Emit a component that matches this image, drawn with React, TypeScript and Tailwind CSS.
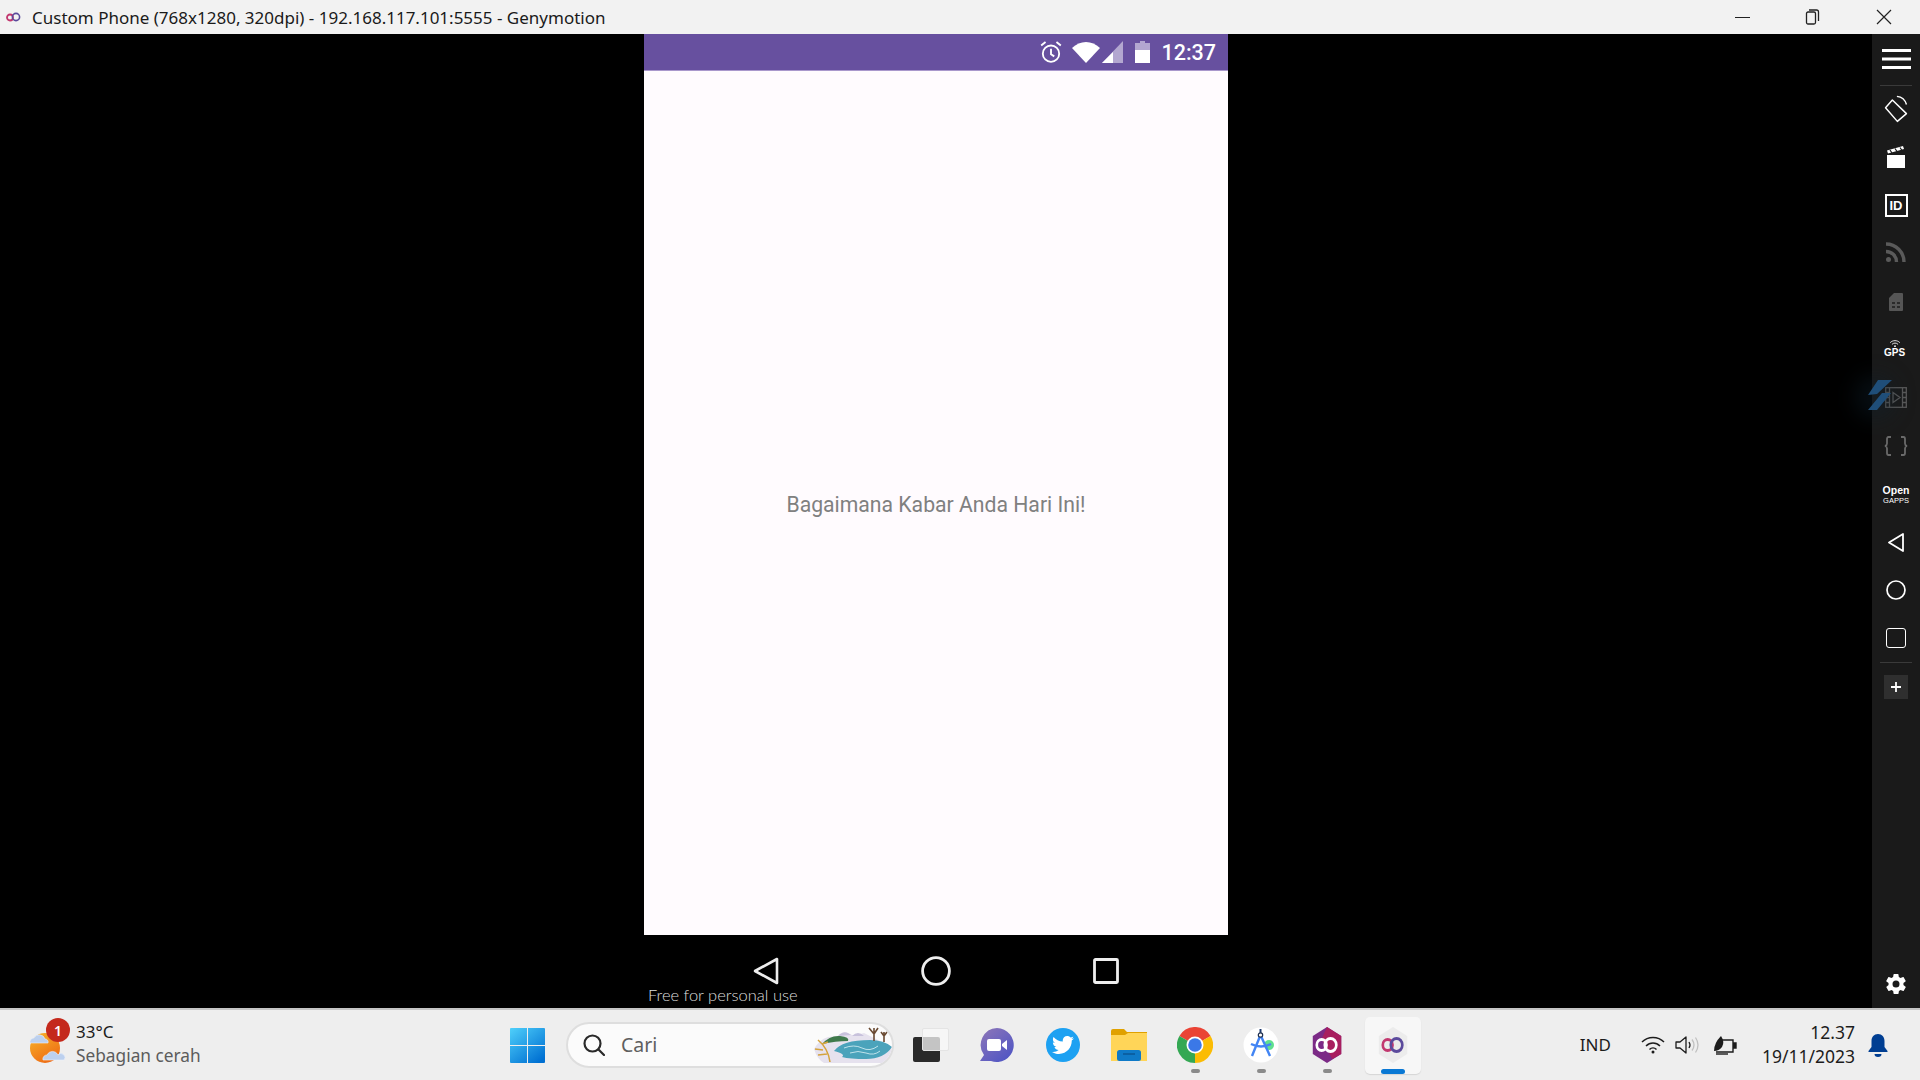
import { FaTwitter } from "react-icons/fa"

const uiFont = "font-['Noto_Sans',sans-serif]"

function GenyLoops({ a, b }: { a: string; b: string }) {
  return (
    <g fill="none" strokeWidth="3">
      <circle cx="12" cy="18" r="5.500" stroke={a} />
      <circle cx="22" cy="18" r="6.500" stroke={b} />
    </g>
  )
}

function TitleBar() {
  return (
    <div className="flex h-[34px] shrink-0 items-center bg-[#f2f2f2]">
      <svg viewBox="0 0 16 10" className="ml-[5px] h-[10px] w-[16px]">
        <circle cx="5" cy="5.5" r="3" fill="none" stroke="#c2386f" strokeWidth="1.8" />
        <circle cx="11" cy="5" r="3.6" fill="none" stroke="#5b4a9c" strokeWidth="1.6" />
      </svg>
      <span className="ml-[11px] whitespace-nowrap pt-[1px] text-[17px] text-[#1a1a1a] font-['Noto_Sans',sans-serif]">
        Custom Phone (768x1280, 320dpi) - 192.168.117.101:5555 - Genymotion
      </span>
      <div className="ml-auto flex items-center">
        <div className="h-px w-[15px] bg-[#222]" />
        <svg viewBox="0 0 15 16" className="ml-[55px] h-[16px] w-[15px]" fill="none" stroke="#222" strokeWidth="1.3">
          <rect x="1.5" y="3" width="9" height="12" rx="1.5" />
          <path d="M4 1h7.5a2 2 0 0 1 2 2v9" />
        </svg>
        <svg viewBox="0 0 16 16" className="ml-[56px] mr-[28px] h-[16px] w-[16px]" fill="none" stroke="#222" strokeWidth="1.2">
          <path d="M1 1l14 14M15 1L1 15" />
        </svg>
      </div>
    </div>
  )
}

function StatusBar() {
  return (
    <div className="flex h-[37px] shrink-0 items-center justify-end border-b border-[#a998cc] bg-[#67509f] pr-[12px]">
      <svg viewBox="0 0 22 22" className="mr-[1px] h-[24px] w-[24px]" fill="none" stroke="#fff" strokeWidth="1.7">
        <circle cx="11" cy="12.5" r="7.5" />
        <path d="M11 8v5l3 2M2 5l4-3.2M20 5l-4-3.2" />
      </svg>
      <svg viewBox="0 0 28 21" className="ml-[8px] h-[21px] w-[28px]" fill="#fff">
        <path d="M0 6C8-2 20-2 28 6L14 21z" />
      </svg>
      <svg viewBox="0 0 21 22" className="ml-[2px] h-[22px] w-[21px]">
        <path d="M21 0v22H0z" fill="#b3a7d0" />
        <path d="M11 11v11H0z" fill="#fff" />
      </svg>
      <svg viewBox="0 0 15 22" className="ml-[12px] h-[22px] w-[15px]">
        <path d="M5 0h5v2h5v20H0V2h5z" fill="#b3a7d0" />
        <path d="M0 9h15v13H0z" fill="#fff" />
      </svg>
      <span className="ml-[11px] pt-[2px] text-[21.500px] font-medium leading-none text-white font-['Roboto',sans-serif]">12:37</span>
    </div>
  )
}

function NavBar() {
  return (
    <div className="relative flex h-[73px] shrink-0 items-center justify-center gap-[142px] pb-[2px]">
      <svg viewBox="0 0 26 28" className="h-[28px] w-[26px]" fill="none" stroke="#eee" strokeWidth="2.6" strokeLinejoin="round">
        <path d="M24 2v24L2 14z" />
      </svg>
      <svg viewBox="0 0 30 30" className="h-[30px] w-[30px]" fill="none" stroke="#eee" strokeWidth="2.8">
        <circle cx="15" cy="15" r="13.4" />
      </svg>
      <svg viewBox="0 0 26 26" className="h-[26px] w-[26px]" fill="none" stroke="#eee" strokeWidth="2.8" strokeLinejoin="round">
        <rect x="1.5" y="1.5" width="23" height="23" rx="1" />
      </svg>
      <span className="absolute bottom-[5px] left-[4px] whitespace-nowrap text-[16.5px] font-light leading-none text-[#dddddd] font-['Lato',sans-serif]">
        Free for personal use
      </span>
    </div>
  )
}

function Toolbar() {
  return (
    <div className="flex w-[48px] shrink-0 flex-col items-center bg-[#1a1a1a]">
      <svg viewBox="0 0 29 20" className="mt-[15px] h-[20px] w-[29px]" fill="#fff">
        <path d="M0 0h29v3H0zM0 8.5h29v3H0zM0 17h29v3H0z" />
      </svg>
      <div className="mt-[16px] h-px w-[32px] bg-[#3a3a3a]" />
      <svg viewBox="0 0 26 33" className="mt-[9px] h-[30px] w-[26px]" fill="none" stroke="#fff" strokeWidth="1.6">
        <path d="M9 5.5L1.5 14l13 15 10-8.500z" strokeLinejoin="round" />
        <path d="M14 1.500c5 .5 9 3.500 10.500 9" />
      </svg>
      <svg viewBox="0 0 18 22" className="mt-[21px] h-[22px] w-[18px]" fill="#fff">
        <path d="M0 9h18v13H0z" />
        <path d="M0 4.500L16 0l1 3L1 7.500z" />
        <path d="M3 4l2 3M8 2.500l2 3M13 1.500l2 3" stroke="#1a1a1a" strokeWidth="1.200" />
      </svg>
      <div className="mt-[26px] flex h-[23px] w-[23px] items-center justify-center border-[2.500px] border-white text-[13px] font-bold leading-none text-white font-['Liberation_Sans',sans-serif]">
        ID
      </div>
      <svg viewBox="0 0 20 20" className="mt-[25px] h-[20px] w-[20px]" fill="none" stroke="#5a5a5a" strokeWidth="3.4">
        <path d="M0 2c10 0 18 8 18 18M0 9.500c6 0 10.500 4.500 10.500 10.500" />
        <circle cx="2.500" cy="17.500" r="2.500" fill="#5a5a5a" stroke="none" />
      </svg>
      <svg viewBox="0 0 14 18" className="mt-[31px] h-[18px] w-[14px]">
        <path d="M5 0h8a1 1 0 0 1 1 1v16a1 1 0 0 1-1 1H1a1 1 0 0 1-1-1V5z" fill="#555" />
        <path d="M3 9h3v2H3zM8 9h3v2H8zM3 13h3v2H3zM8 13h3v2H8z" fill="#2a2a2a" />
      </svg>
      <div className="mt-[29px] mr-[3px] flex h-[18px] flex-col items-center">
        <svg viewBox="0 0 12 8" className="h-[7px] w-[12px]" fill="none" stroke="#fff" strokeWidth="1">
          <path d="M.5 3c3-3 8-3 11 0M2.500 5c2-2 5-2 7 0" />
          <circle cx="6" cy="7" r="1" fill="#fff" stroke="none" />
        </svg>
        <span className="text-[10px] font-bold leading-[11px] text-white font-['Liberation_Sans',sans-serif]">GPS</span>
      </div>
      <div className="relative mt-[29px] h-[21px] w-[22px]">
        <svg viewBox="0 0 22 21" className="h-[21px] w-[22px]" fill="none" stroke="#5a5a5a" strokeWidth="1.3">
          <rect x=".7" y=".7" width="20.600" height="19.600" />
          <path d="M4.500 1v19M17.500 1v19M1 5.500h3.500M1 10.500h3.500M1 15.500h3.500M17.500 5.500H21M17.500 10.500H21M17.500 15.500H21M8 5.500v10l7-5z" />
        </svg>
        <div className="absolute left-[-30px] top-[-12px] h-[44px] w-[40px] rounded-full bg-[#10202e]/40 blur-[10px]" />
        <svg viewBox="0 0 24 30" className="absolute left-[-17px] top-[-7px] h-[30px] w-[24px]" fill="#1f4e79">
          <path d="M10 0h14L9 14 0 15zM14 13h9L9 30H0z" />
        </svg>
      </div>
      <svg viewBox="0 0 24 20" className="mt-[28px] h-[20px] w-[24px]" fill="none" stroke="#6a6a6a" strokeWidth="1.800">
        <path d="M7 1H4.500Q3 1 3 3v4.500Q3 9.500 1 10q2 .5 2 2.500V17q0 2 1.500 2H7M17 1h2.500Q21 1 21 3v4.500q0 2 2 2.500-2 .5-2 2.500V17q0 2-1.500 2H17" />
      </svg>
      <div className="mt-[29px] flex h-[20px] flex-col items-center text-white font-['Liberation_Sans',sans-serif]">
        <span className="text-[10.500px] font-bold leading-[11px]">Open</span>
        <span className="text-[7.500px] leading-[9px]">GAPPS</span>
      </div>
      <svg viewBox="0 0 16 19" className="mt-[28px] h-[19px] w-[16px]" fill="none" stroke="#fff" strokeWidth="1.8" strokeLinejoin="round">
        <path d="M15 1v17L1 9.500z" />
      </svg>
      <svg viewBox="0 0 20 20" className="mt-[28px] h-[20px] w-[20px]" fill="none" stroke="#fff" strokeWidth="1.7">
        <circle cx="10" cy="10" r="9" />
      </svg>
      <div className="mt-[28px] h-[20px] w-[20px] rounded-[3px] border-[1.7px] border-white" />
      <div className="mt-[14px] h-px w-[32px] bg-[#3a3a3a]" />
      <div className="mt-[12px] flex h-[24px] w-[24px] items-center justify-center bg-[#2f2f2f]">
        <svg viewBox="0 0 10 10" className="h-[10px] w-[10px]" stroke="#fff" strokeWidth="1.800">
          <path d="M5 0v10M0 5h10" />
        </svg>
      </div>
      <svg viewBox="0 0 24 24" className="mb-[12px] mt-auto h-[24px] w-[24px]" fill="#fff">
        <path
          fillRule="evenodd"
          d="M19.400 13c.04-.3.100-.7.100-1s-.03-.7-.1-1l2.100-1.600c.2-.15.25-.4.120-.65l-2-3.460c-.12-.22-.4-.3-.6-.22l-2.500 1c-.52-.4-1.080-.73-1.700-.98l-.37-2.650A.5.500 0 0 0 14 2h-4a.5.500 0 0 0-.5.420l-.37 2.650c-.62.25-1.180.58-1.700.98l-2.500-1c-.22-.08-.48 0-.6.22l-2 3.460c-.130.220-.070.500.120.650L4.600 11c-.06.300-.1.700-.1 1s.03.700.1 1l-2.100 1.650c-.2.150-.25.430-.12.650l2 3.460c.12.220.38.300.6.220l2.500-1c.52.400 1.080.730 1.700.980l.37 2.650c.04.240.25.420.5.420h4c.25 0 .46-.180.500-.420l.37-2.650c.62-.250 1.180-.580 1.700-.980l2.500 1c.220.080.480 0 .6-.220l2-3.460c.120-.220.070-.500-.120-.650zM12 15.500a3.500 3.500 0 1 1 0-7 3.500 3.500 0 0 1 0 7z"
        />
      </svg>
    </div>
  )
}

function Weather() {
  return (
    <div className="flex w-[494px] shrink-0 items-center pl-[28px]">
      <div className="relative h-[38px] w-[38px]">
        <svg viewBox="0 0 38 38" className="h-[38px] w-[38px]">
          <defs>
            <linearGradient id="sun" x1="0" y1="0" x2="0.600" y2="1">
              <stop offset="0" stopColor="#f8b62a" />
              <stop offset="1" stopColor="#ee6c14" />
            </linearGradient>
          </defs>
          <circle cx="17" cy="22" r="15" fill="url(#sun)" />
          <path d="M2 17a4 4 0 0 1 4-5 6 6 0 0 1 11 1 3 3 0 0 1 3 4z" fill="#bcd0ee" stroke="#e9f0fb" strokeWidth=".6" />
          <path d="M15 34a4 4 0 0 1 4-5 6 6 0 0 1 11 0 3.500 3.500 0 0 1 6 5z" fill="#bcd0ee" stroke="#e9f0fb" strokeWidth=".6" />
        </svg>
        <span className="absolute right-[-4px] top-[-8px] flex h-[24px] w-[24px] items-center justify-center rounded-full bg-[#c4291c] text-[14px] font-semibold text-white font-['Noto_Sans',sans-serif]">
          1
        </span>
      </div>
      <div className={`ml-[10px] flex flex-col pb-[2px] ${uiFont}`}>
        <span className="text-[17px] leading-[24px] text-[#1c1c1c]">33°C</span>
        <span className="text-[17.300px] leading-[24px] text-[#5c5c5c]">Sebagian cerah</span>
      </div>
    </div>
  )
}

function Search() {
  return (
    <div className="relative ml-[6px] flex h-[46px] w-[328px] shrink-0 items-center overflow-hidden rounded-full border-2 border-[#dedede] bg-[#fbfbfb] pl-[15px]">
      <svg viewBox="0 0 22 22" className="h-[22px] w-[22px]" fill="none" stroke="#2a2a2a" strokeWidth="2.200" strokeLinecap="round">
        <circle cx="9.500" cy="9.500" r="8" />
        <path d="M15.500 15.500l5.500 5.500" />
      </svg>
      <span className="ml-[16px] text-[19.500px] text-[#5f5f5f] font-['Noto_Sans',sans-serif]">Cari</span>
      <svg viewBox="0 0 78 36" className="ml-auto h-[36px] w-[78px]">
        <path d="M0 22Q6 12 14 10l10-1 8-4 8 4 10-3 28 14v16H10Q3 32 0 22z" fill="#e6e2ee" />
        <path d="M8 17q8-9 18-8t8 5q-12 0-26 3z" fill="#3f7a4c" />
        <path d="M24 9q6-7 13-1zM38 9q6-6 12 0z" fill="#c8c2dc" />
        <path d="M20 24Q28 13 56 13q14 0 22 7-8 12-26 12-16 0-24-2 4-3-8-6z" fill="#4ba3bb" />
        <path d="M30 21q10-4 18 0t16-2M36 26q8-3 16 0t14-2" fill="none" stroke="#bfe2ea" strokeWidth="1" />
        <path d="M60 14V1M60 7l-5-6M60 7l4-6M70 15V5M70 9l-3-4M70 9l3-4" stroke="#6a4a32" strokeWidth="1.600" fill="none" />
        <path d="M4 13q10 8 12 22M1 22l8 1M4 28l9-1M8 17l6-2" stroke="#d4a33c" strokeWidth="1.600" fill="none" />
      </svg>
    </div>
  )
}

function AppSlot({ children, running, active }: { children: React.ReactNode; running?: boolean; active?: boolean }) {
  return (
    <div className="relative flex h-[57px] w-[66px] shrink-0 items-center justify-center">
      {active && <div className="absolute inset-y-0 left-[5px] right-[5px] rounded-[5px] bg-[#f7f7f7] shadow-[0_1px_1px_#d5d5d5]" />}
      <div className="relative flex">{children}</div>
      {running && <div className="absolute bottom-[1px] h-[4px] w-[9px] rounded-full bg-[#8a8a8a]" />}
      {active && <div className="absolute bottom-0 h-[5px] w-[24px] rounded-full bg-[#0a78d4]" />}
    </div>
  )
}

function AppIcons() {
  return (
    <>
      <AppSlot>
        <svg viewBox="0 0 34 34" className="h-[34px] w-[34px]">
          <defs>
            <linearGradient id="meet" x1="0" y1="0" x2="0.800" y2="1">
              <stop offset="0" stopColor="#8f77b8" />
              <stop offset="1" stopColor="#4f55c4" />
            </linearGradient>
          </defs>
          <path d="M17 0a17 17 0 1 1-6 33H0l4-6A17 17 0 0 1 17 0z" fill="url(#meet)" />
          <rect x="7" y="11" width="14" height="12" rx="2" fill="#fff" />
          <path d="M22 16l5-4v10l-5-4z" fill="#fff" />
        </svg>
      </AppSlot>
      <AppSlot>
        <div className="flex h-[34px] w-[34px] items-center justify-center rounded-full bg-[#1da1f2]">
          <FaTwitter className="h-[22px] w-[22px] text-white" />
        </div>
      </AppSlot>
      <AppSlot>
        <svg viewBox="0 0 36 32" className="h-[32px] w-[36px]">
          <path d="M0 2q0-2 2-2h11l3 3h20v29H0z" fill="#e0a100" />
          <path d="M0 6h14l3-2h19v28H0z" fill="#ffd558" />
          <rect x="6" y="21" width="24" height="11" rx="2.500" fill="#0f7ac8" />
          <path d="M12 25h12" stroke="#0a4f8a" strokeWidth="1.200" />
        </svg>
      </AppSlot>
      <AppSlot running>
        <svg viewBox="0 0 36 36" className="h-[36px] w-[36px]">
          <path d="M18 18L2.400 9A18 18 0 0 1 33.600 9z" fill="#ea4335" />
          <path d="M18 18L33.600 9A18 18 0 0 1 18 36z" fill="#fbbc04" />
          <path d="M18 18L18 36A18 18 0 0 1 2.400 9z" fill="#34a853" />
          <circle cx="18" cy="18" r="8.500" fill="#fff" />
          <circle cx="18" cy="18" r="6.800" fill="#3b78e7" />
        </svg>
      </AppSlot>
      <AppSlot running>
        <svg viewBox="0 0 36 36" className="h-[36px] w-[36px]">
          <circle cx="18" cy="18" r="17.500" fill="#fff" />
          <circle cx="26" cy="18" r="5" fill="#5fe08f" />
          <path d="M17.500 8L9 29M17.500 8L27 29M8 17q10 5 20 0" fill="none" stroke="#4285f4" strokeWidth="2.400" />
          <path d="M17.500 2v4" stroke="#1f3a6e" strokeWidth="2" />
          <circle cx="17.500" cy="8" r="2.200" fill="#fff" stroke="#1f2f4e" strokeWidth="1.200" />
        </svg>
      </AppSlot>
      <AppSlot running>
        <svg viewBox="0 0 36 36" className="h-[36px] w-[32px]" preserveAspectRatio="none">
          <path d="M18 0l16 9v18l-16 9-16-9V9z" fill="#7b2a86" />
          <path d="M18 0l16 9v18l-10 5L12 12z" fill="#a81f5f" />
          <GenyLoops a="#fff" b="#fff" />
        </svg>
      </AppSlot>
      <AppSlot active>
        <svg viewBox="0 0 36 36" className="h-[36px] w-[32px]" preserveAspectRatio="none">
          <path d="M18 0l16 9v18l-16 9-16-9V9z" fill="#ececec" />
          <GenyLoops a="#c2386f" b="#5b4a9c" />
        </svg>
      </AppSlot>
    </>
  )
}

function Taskbar() {
  return (
    <div className="flex h-[72px] shrink-0 items-center border-t-2 border-[#c6c6c6] bg-[#eeeeee]">
      <Weather />
      <div className="flex w-[66px] shrink-0 justify-center">
        <svg viewBox="0 0 35 35" className="h-[35px] w-[35px]">
          <defs>
            <linearGradient id="win" x1="0" y1="0" x2="0.800" y2="1">
              <stop offset="0" stopColor="#4fd0fb" />
              <stop offset="1" stopColor="#0070d2" />
            </linearGradient>
          </defs>
          <path d="M0 1q0-1 1-1h16v17H0zM18 0h16q1 0 1 1v16H18zM0 18h17v17H1q-1 0-1-1zM18 18h17v16q0 1-1 1H18z" fill="url(#win)" />
        </svg>
      </div>
      <Search />
      <div className="ml-[4px] flex w-[66px] shrink-0 justify-center">
        <div className="relative h-[34px] w-[36px]">
          <div className="absolute bottom-0 left-0 h-[25px] w-[27px] rounded-[2px] bg-[#2a2a2a]" />
          <div className="absolute right-0 top-0 h-[23px] w-[27px] rounded-[2px] border border-[#e4e4e4] bg-[#f8f8f8]/75" />
        </div>
      </div>
      <AppIcons />
      <div className={`ml-auto flex items-center ${uiFont}`}>
        <span className="text-[17px] text-[#1c1c1c]">IND</span>
        <svg viewBox="0 0 24 18" className="ml-[30px] h-[18px] w-[24px]" fill="none" stroke="#1c1c1c" strokeWidth="1.500">
          <path d="M1 6c6-6 16-6 22 0M5 10c4-4 10-4 14 0M8.500 13.500c2-2 5-2 7 0" />
          <circle cx="12" cy="16" r="1.500" fill="#1c1c1c" stroke="none" />
        </svg>
        <svg viewBox="0 0 24 18" className="ml-[10px] h-[18px] w-[24px]" fill="none" stroke="#1c1c1c" strokeWidth="1.300">
          <path d="M1 6h4l6-5v16l-6-5H1z" strokeLinejoin="round" />
          <path d="M14 6q2 3 0 6" />
          <path d="M17 3.500q4 5.500 0 11M20.500 1.500q5 7.500 0 15" stroke="#c0c0c0" />
        </svg>
        <svg viewBox="0 0 24 22" className="ml-[14px] h-[22px] w-[24px]" fill="none" stroke="#1c1c1c" strokeWidth="1.400">
          <path d="M8 6h12v12H3" />
          <path d="M20 9h3v5h-3" fill="#1c1c1c" />
          <path d="M1 17q0-8 7-15 4 6 1 11-3 4-8 4z" fill="#1c1c1c" stroke="none" />
          <path d="M3 20h12" />
        </svg>
        <div className="ml-[25px] flex flex-col items-end pb-[2px] text-[17.500px] leading-[24px] text-[#1c1c1c]">
          <span>12.37</span>
          <span>19/11/2023</span>
        </div>
        <svg viewBox="0 0 20 23" className="ml-[13px] mr-[32px] h-[23px] w-[20px]" fill="#003e92">
          <path d="M10 0c4 0 6.500 3 6.500 7v6l3 4v1H.5v-1l3-4V7c0-4 2.500-7 6.500-7z" />
          <path d="M6.500 20h7a3.500 3 0 0 1-7 0z" />
        </svg>
      </div>
    </div>
  )
}

export default function App() {
  return (
    <div className="flex h-screen w-[1920px] flex-col overflow-hidden bg-black">
      <TitleBar />
      <div className="flex min-h-0 flex-1">
        <div className="flex flex-1 justify-center">
          <div className="flex w-[584px] flex-col">
            <StatusBar />
            <div className="flex flex-1 items-center justify-center bg-[#fffbfe] pt-[4px]">
              <span className="text-[21.200px] text-[#808080] font-['Roboto',sans-serif]">Bagaimana Kabar Anda Hari Ini!</span>
            </div>
            <NavBar />
          </div>
        </div>
        <Toolbar />
      </div>
      <Taskbar />
    </div>
  )
}
